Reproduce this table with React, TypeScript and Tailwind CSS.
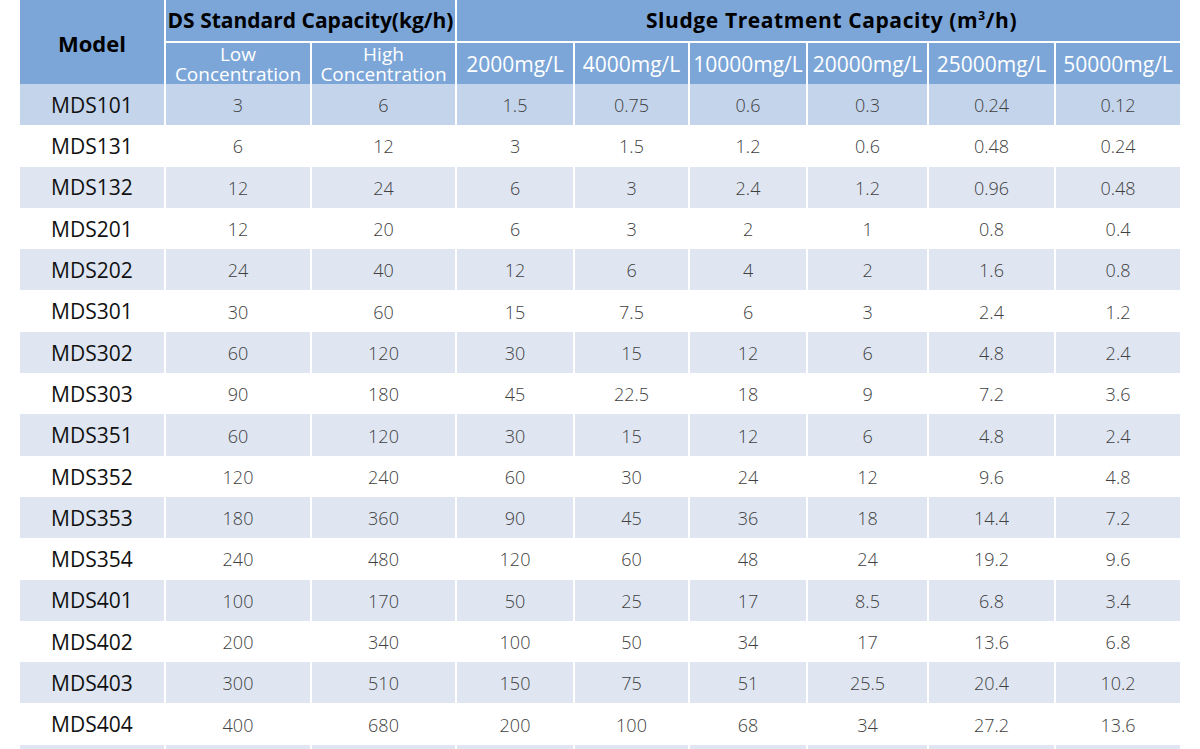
import React from 'react'

const rows: [string, string, string, string, string, string, string, string, string][] = [
  ['MDS101', '3', '6', '1.5', '0.75', '0.6', '0.3', '0.24', '0.12'],
  ['MDS131', '6', '12', '3', '1.5', '1.2', '0.6', '0.48', '0.24'],
  ['MDS132', '12', '24', '6', '3', '2.4', '1.2', '0.96', '0.48'],
  ['MDS201', '12', '20', '6', '3', '2', '1', '0.8', '0.4'],
  ['MDS202', '24', '40', '12', '6', '4', '2', '1.6', '0.8'],
  ['MDS301', '30', '60', '15', '7.5', '6', '3', '2.4', '1.2'],
  ['MDS302', '60', '120', '30', '15', '12', '6', '4.8', '2.4'],
  ['MDS303', '90', '180', '45', '22.5', '18', '9', '7.2', '3.6'],
  ['MDS351', '60', '120', '30', '15', '12', '6', '4.8', '2.4'],
  ['MDS352', '120', '240', '60', '30', '24', '12', '9.6', '4.8'],
  ['MDS353', '180', '360', '90', '45', '36', '18', '14.4', '7.2'],
  ['MDS354', '240', '480', '120', '60', '48', '24', '19.2', '9.6'],
  ['MDS401', '100', '170', '50', '25', '17', '8.5', '6.8', '3.4'],
  ['MDS402', '200', '340', '100', '50', '34', '17', '13.6', '6.8'],
  ['MDS403', '300', '510', '150', '75', '51', '25.5', '20.4', '10.2'],
  ['MDS404', '400', '680', '200', '100', '68', '34', '27.2', '13.6'],
]

const concentrations = ['2000mg/L', '4000mg/L', '10000mg/L', '20000mg/L', '25000mg/L', '50000mg/L']

function rowBg(i: number) {
  if (i === 0) return 'bg-[#c3d4eb]'
  return i % 2 === 0 ? 'bg-[#dfe6f2]' : 'bg-white'
}

export default function App() {
  return (
    <div className="min-h-screen bg-white px-[20px] font-['Open_Sans','Noto_Sans',sans-serif]">
      <table className="table-fixed border-collapse w-[1160px]">
        <colgroup>
          <col className="w-[145px]" />
          <col className="w-[146px]" />
          <col className="w-[145px]" />
          <col className="w-[118px]" />
          <col className="w-[115px]" />
          <col className="w-[118px]" />
          <col className="w-[121px]" />
          <col className="w-[127px]" />
          <col className="w-[125px]" />
        </colgroup>
        <thead className="bg-[#7ca6d8]">
          <tr className="h-[42px]">
            <th rowSpan={2} className="pt-[2px] text-[22px] font-bold text-black">
              Model
            </th>
            <th colSpan={2} className="border-l-2 border-b-2 border-white text-[21px] font-bold text-black">
              DS Standard Capacity(kg/h)
            </th>
            <th colSpan={6} className="border-l-2 border-b-2 border-white pl-[26px] text-[21px] font-bold tracking-[0.6px] text-black">
              Sludge Treatment Capacity (m<sup className="text-[12px] -top-[8px]">3</sup>/h)
            </th>
          </tr>
          <tr className="h-[42px]">
            <th className="border-l-2 border-white text-[19px] font-normal leading-[20px] text-white">
              Low
              <br />
              Concentration
            </th>
            <th className="border-l-2 border-white text-[19px] font-normal leading-[20px] text-white">
              High
              <br />
              Concentration
            </th>
            {concentrations.map((c) => (
              <th key={c} className="border-l-2 border-white pt-[2px] text-[21px] font-normal text-white whitespace-nowrap">
                {c}
              </th>
            ))}
          </tr>
        </thead>
        <tbody>
          {rows.map((r, i) => (
            <tr key={r[0]} className={`h-[41.3px] ${rowBg(i)}`}>
              <td className="pl-[31px] pt-[2px] text-[21px] text-[#111]">{r[0]}</td>
              {r.slice(1).map((v, j) => (
                <td key={j} className="border-l-2 border-white pt-[2px] text-center text-[18px] font-light text-[#404040]">
                  {v}
                </td>
              ))}
            </tr>
          ))}
          <tr className="h-[41.3px] bg-[#dfe6f2]">
            <td />
            {concentrations.concat(['', '']).map((_, j) => (
              <td key={j} className="border-l-2 border-white" />
            ))}
          </tr>
        </tbody>
      </table>
    </div>
  )
}
